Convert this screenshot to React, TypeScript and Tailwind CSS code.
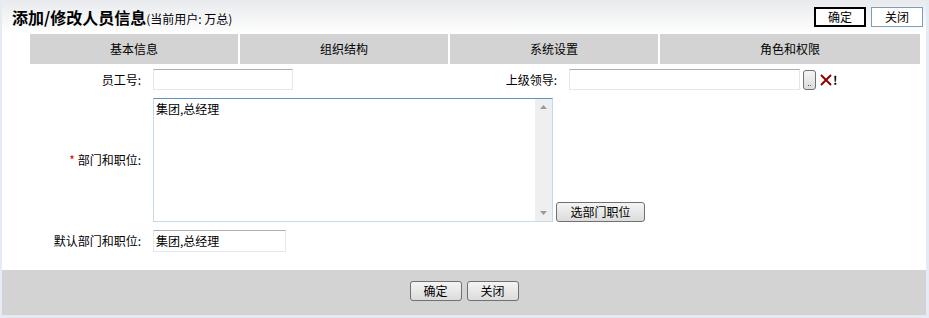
import React from 'react';

const font = { fontFamily: '"Noto Sans CJK SC", "Liberation Sans", sans-serif' };

function Btn({ children, className = '' }: { children: React.ReactNode; className?: string }) {
  return (
    <button
      className={`flex h-[20px] w-[52px] items-center justify-center rounded-[3px] border border-[#707070] bg-gradient-to-b from-[#f4f4f4] to-[#dcdcdc] text-[12px] leading-none text-black ${className}`}
    >
      {children}
    </button>
  );
}

function Input({ className = '', value = '' }: { className?: string; value?: string }) {
  return (
    <div
      className={`flex items-center border border-[#e2e8ef] border-t-[#abadb3] bg-white pl-[2px] text-[12px] leading-none text-black ${className}`}
    >
      {value}
    </div>
  );
}

export default function App() {
  const tabs = ['基本信息', '组织结构', '系统设置', '角色和权限'];

  return (
    <div style={font} className="h-[318px] w-[929px] bg-[#e4ebf3] pb-[3px] pl-[2px] pr-[3px]">
      <div className="flex h-full flex-col bg-white">
        {/* header */}
        <div className="flex h-[34px] shrink-0 items-center justify-between bg-gradient-to-b from-[#e8eaed] to-white pl-[10px] pr-[3px]">
          <div className="flex items-end text-black">
            <span className="text-[16px] font-bold leading-none">添加/修改人员信息</span>
            <span className="text-[12px] leading-none">(当前用户: 万总)</span>
          </div>
          <div className="flex gap-[5px]">
            <button className="flex h-[20px] w-[52px] items-center justify-center border-2 border-black bg-white text-[12px] leading-none">
              确定
            </button>
            <button className="flex h-[20px] w-[52px] items-center justify-center border border-[#7f9db9] bg-white text-[12px] leading-none">
              关闭
            </button>
          </div>
        </div>

        {/* tabs */}
        <div className="ml-[28px] flex h-[30px] shrink-0 gap-[2px] text-[12px]">
          {tabs.map((t, i) => (
            <div
              key={t}
              className={`flex items-center justify-center bg-[#d3d3d3] text-black ${i === 3 ? 'w-[260px]' : 'w-[208px]'}`}
            >
              {t}
            </div>
          ))}
        </div>

        {/* row 1 */}
        <div className="mt-[5px] flex h-[21px] items-center text-[12px]">
          <div className="w-[139px] text-right">员工号:</div>
          <Input className="ml-[12px] h-[21px] w-[140px]" />
          <div className="w-[264px] text-right">上级领导:</div>
          <Input className="ml-[12px] h-[21px] w-[231px]" />
          <div className="ml-[3px] flex h-[20px] w-[13px] items-end justify-center rounded-[3px] border border-[#707070] bg-gradient-to-b from-[#f4f4f4] to-[#dcdcdc] pb-[3px]">
            <div className="flex gap-[1px]">
              <div className="h-[1px] w-[1px] bg-[#4040c0]" />
              <div className="h-[1px] w-[1px] bg-[#c040c0]" />
            </div>
          </div>
          <svg className="ml-[4px]" width="12" height="12" viewBox="0 0 12 12">
            <path d="M1 1 L11 11 M11 1 L1 11" stroke="#8b0000" strokeWidth="2" />
          </svg>
          <span className="ml-[1px] text-[12px] font-bold leading-none">!</span>
        </div>

        {/* row 2 */}
        <div className="mt-[8px] flex items-center text-[12px]">
          <div className="w-[139px] text-right">
            <span className="text-[#e00000]">*</span> 部门和职位:
          </div>
          <div className="ml-[12px] flex h-[124px] w-[400px] border border-[#c5d9ec] border-t-[#5b96c8] bg-white">
            <div className="flex-1 pl-[2px] pt-[4px] leading-none">集团,总经理</div>
            <div className="flex w-[17px] flex-col items-center justify-between bg-[#efefef] py-[6px]">
              <svg width="7" height="4" viewBox="0 0 7 4">
                <path d="M0 4 L3.5 0 L7 4 Z" fill="#9a9a9a" />
              </svg>
              <svg width="7" height="4" viewBox="0 0 7 4">
                <path d="M0 0 L3.5 4 L7 0 Z" fill="#9a9a9a" />
              </svg>
            </div>
          </div>
          <Btn className="ml-[3px] w-[89px] self-end">选部门职位</Btn>
        </div>

        {/* row 3 */}
        <div className="mt-[8px] flex h-[21px] items-center text-[12px]">
          <div className="w-[139px] text-right">默认部门和职位:</div>
          <Input className="ml-[12px] h-[22px] w-[133px]" value="集团,总经理" />
        </div>

        {/* footer */}
        <div className="mt-[19px] flex flex-1 items-start justify-center gap-[5px] bg-[#d3d3d3] pt-[11px]">
          <Btn>确定</Btn>
          <Btn>关闭</Btn>
        </div>
      </div>
    </div>
  );
}
